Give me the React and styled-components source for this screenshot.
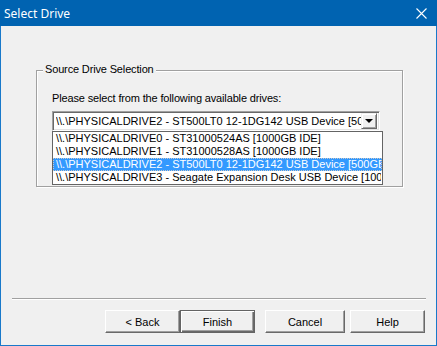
import styled, { createGlobalStyle } from "styled-components";

const GlobalStyle = createGlobalStyle`
  html, body {
    margin: 0;
    padding: 0;
    background: #f0f0f0;
  }
  body {
    font-family: "Liberation Sans", Arial, sans-serif;
    font-size: 11px;
    color: #000;
  }
`;

const Window = styled.div`
  width: 437px;
  height: 346px;
  display: flex;
  flex-direction: column;
  background: #f0f0f0;
`;

const TitleBar = styled.div`
  height: 26px;
  flex: none;
  background: #0063b1;
  color: #fff;
  display: flex;
  align-items: center;
  justify-content: space-between;
  padding: 0 10px 0 4px;
  font-family: "Noto Sans", "Open Sans", sans-serif;
  font-size: 12px;
`;

const Frame = styled.div`
  flex: 1;
  display: flex;
  flex-direction: column;
  border: 1px solid #1979ca;
  border-top: none;
`;

const Content = styled.div`
  flex: 1;
  padding: 44px 0 0 35px;
`;

const GroupBox = styled.div`
  position: relative;
  box-sizing: border-box;
  width: 367px;
  height: 117px;
  border: 1px solid #a0a0a0;
  box-shadow: inset 1px 1px #fff, 1px 1px #fff;
  padding: 21px 0 0 15px;
`;

const Legend = styled.span`
  position: absolute;
  top: -8px;
  left: 6px;
  padding: 0 2px;
  line-height: 13px;
  letter-spacing: -0.15px;
  background: #f0f0f0;
`;

const Prompt = styled.div`
  line-height: 13px;
  letter-spacing: -0.15px;
  margin-bottom: 6px;
`;

const ComboWrap = styled.div`
  position: relative;
  width: 328px;
`;

const Combo = styled.div`
  box-sizing: border-box;
  height: 20px;
  display: flex;
  align-items: center;
  background: #fff;
  border: 1px solid;
  border-color: #a0a0a0 #fff #fff #a0a0a0;
  box-shadow: inset 1px 1px #696969, inset -1px -1px #e3e3e3;
  padding: 2px 2px 2px 3px;
`;

const ComboText = styled.span`
  flex: 1;
  overflow: hidden;
  white-space: nowrap;
  line-height: 13px;
`;

const ArrowButton = styled.div`
  box-sizing: border-box;
  width: 16px;
  height: 16px;
  flex: none;
  display: flex;
  align-items: center;
  justify-content: center;
  background: #f0f0f0;
  border: 1px solid;
  border-color: #f0f0f0 #696969 #696969 #f0f0f0;
  box-shadow: inset 1px 1px #fff, inset -1px -1px #a0a0a0;

  &::after {
    content: "";
    border-left: 4px solid transparent;
    border-right: 4px solid transparent;
    border-top: 4px solid #000;
  }
`;

const DropList = styled.ul`
  position: absolute;
  top: 100%;
  left: 0;
  box-sizing: border-box;
  width: 331px;
  margin: 0;
  padding: 0;
  list-style: none;
  background: #fff;
  border: 1px solid #646464;
  overflow: hidden;
`;

const Item = styled.li`
  box-sizing: border-box;
  height: 13px;
  line-height: 11px;
  padding-left: 2px;
  white-space: nowrap;
  overflow: hidden;
  background: ${(p) => (p.$selected ? "#3399ff" : "transparent")};
  color: ${(p) => (p.$selected ? "#fff" : "#000")};
  border: 1px dotted ${(p) => (p.$selected ? "#c8c8c8" : "transparent")};
`;

const Separator = styled.div`
  height: 0;
  margin: 0 10px 0 11px;
  border-top: 1px solid #a0a0a0;
  border-bottom: 1px solid #fff;
`;

const ButtonRow = styled.div`
  display: flex;
  padding: 10px 0 12px 104px;
`;

const Button = styled.button`
  box-sizing: border-box;
  width: ${(p) => p.$width || 75}px;
  height: 23px;
  margin-left: ${(p) => p.$gap || 0}px;
  font-family: "Liberation Sans", Arial, sans-serif;
  font-size: 11px;
  color: #000;
  background: #f0f0f0;
  padding: 0;
  border: 1px solid;
  border-color: ${(p) =>
    p.$default ? "#646464" : "#fff #696969 #696969 #fff"};
  box-shadow: ${(p) =>
    p.$default
      ? "inset 1px 1px #fff, inset -1px -1px #696969, inset -2px -2px #a0a0a0"
      : "inset -1px -1px #a0a0a0, inset 1px 1px #f0f0f0"};
`;

const CloseIcon = () => (
  <svg width="11" height="11" viewBox="0 0 11 11">
    <path d="M0.5 0.5 L10.5 10.5 M10.5 0.5 L0.5 10.5" stroke="#fff" strokeWidth="1.1" />
  </svg>
);

const drives = [
  "\\\\.\\PHYSICALDRIVE0 - ST31000524AS [1000GB IDE]",
  "\\\\.\\PHYSICALDRIVE1 - ST31000528AS [1000GB IDE]",
  "\\\\.\\PHYSICALDRIVE2 - ST500LT0 12-1DG142 USB Device [500GB USB]",
  "\\\\.\\PHYSICALDRIVE3 - Seagate Expansion Desk USB Device [1000GB USB]",
];

export default function App() {
  return (
    <>
      <GlobalStyle />
      <Window>
        <TitleBar>
          <span>Select Drive</span>
          <CloseIcon />
        </TitleBar>
        <Frame>
          <Content>
            <GroupBox>
              <Legend>Source Drive Selection</Legend>
              <Prompt>Please select from the following available drives:</Prompt>
              <ComboWrap>
                <Combo>
                  <ComboText>{drives[2]}</ComboText>
                  <ArrowButton />
                </Combo>
                <DropList>
                  {drives.map((d, i) => (
                    <Item key={d} $selected={i === 2}>
                      {d}
                    </Item>
                  ))}
                </DropList>
              </ComboWrap>
            </GroupBox>
          </Content>
          <Separator />
          <ButtonRow>
            <Button>&lt; Back</Button>
            <Button $default>Finish</Button>
            <Button $gap={10} $width={80}>Cancel</Button>
            <Button $gap={5}>Help</Button>
          </ButtonRow>
        </Frame>
      </Window>
    </>
  );
}
